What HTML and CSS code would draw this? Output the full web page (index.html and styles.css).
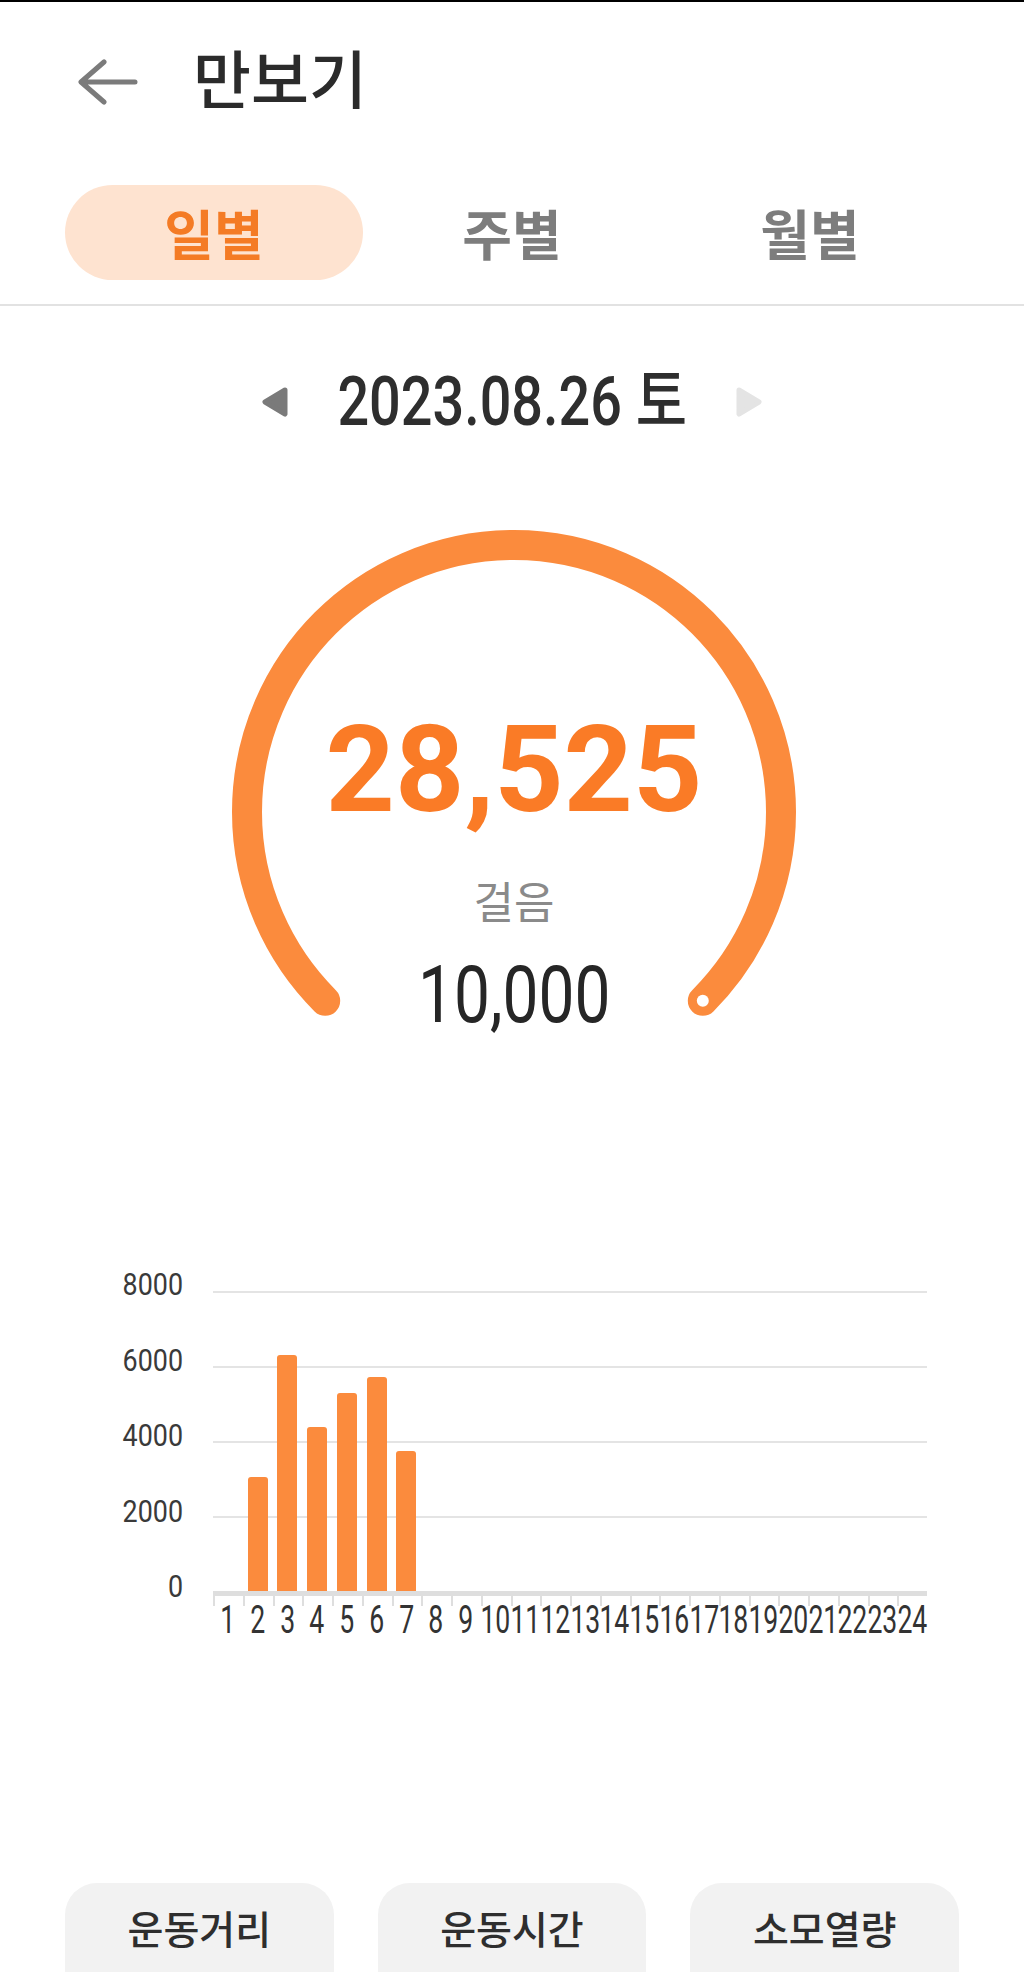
FILE: index.html
```html
<!DOCTYPE html>
<html lang="ko">
<head>
    <meta charset="UTF-8">
    <meta name="viewport" content="width=device-width, initial-scale=1.0">
    <title>만보기</title>
    <link rel="stylesheet" href="styles.css">
</head>
<body>

    <header class="header">
        <svg class="back" width="60" height="48" viewBox="0 0 60 48">
            <path d="M57 24H4M26 4L3 24L26 44" fill="none" stroke="#7b7b7b" stroke-width="5" stroke-linecap="round" stroke-linejoin="round"/>
        </svg>
        <h1 class="title">만보기</h1>
    </header>

    <nav class="tabs">
        <div class="tab active">일별</div>
        <div class="tab">주별</div>
        <div class="tab">월별</div>
    </nav>

    <div class="date-row">
        <svg width="28" height="32" viewBox="0 0 28 32">
            <polygon points="24,4 4,16 24,28" fill="#7a7a7a" stroke="#7a7a7a" stroke-width="5" stroke-linejoin="round"/>
        </svg>
        <span class="date">2023.08.26 토</span>
        <svg width="28" height="32" viewBox="0 0 28 32">
            <polygon points="4,4 24,16 4,28" fill="#e4e4e4" stroke="#e4e4e4" stroke-width="5" stroke-linejoin="round"/>
        </svg>
    </div>

    <div class="gauge">
        <svg width="600" height="600" viewBox="0 0 600 600">
            <path d="M111.2 488.8A267 267 0 1 1 488.8 488.8" fill="none" stroke="#fb8b3d" stroke-width="30" stroke-linecap="round"/>
            <circle cx="488.8" cy="488.8" r="6" fill="#fff"/>
        </svg>
        <div class="gauge-text">
            <div class="steps">28,525</div>
            <div class="unit">걸음</div>
            <div class="goal"><span>10,000</span></div>
        </div>
    </div>

    <section class="chart">
        <div class="y-labels">
            <span>8000</span>
            <span>6000</span>
            <span>4000</span>
            <span>2000</span>
            <span>0</span>
        </div>
        <div class="plot-wrap">
            <div class="plot">
                <div class="lines"><i></i><i></i><i></i><i></i><i class="base"></i></div>
                <div class="bars" id="bars"></div>
            </div>
            <div class="x-axis" id="xAxis"></div>
        </div>
    </section>

    <div class="cards">
        <div class="card">운동거리</div>
        <div class="card">운동시간</div>
        <div class="card">소모열량</div>
    </div>

    <script>
        const hourlySteps = [0, 3050, 6310, 4400, 5300, 5725, 3740, 0, 0, 0, 0, 0,
                             0, 0, 0, 0, 0, 0, 0, 0, 0, 0, 0, 0];
        const maxSteps = 8000;
        const plotHeight = 299;

        const barsEl = document.getElementById('bars');
        const xAxisEl = document.getElementById('xAxis');

        hourlySteps.forEach(function(steps, i) {
            const col = document.createElement('div');
            col.className = 'bar-col';
            if (steps > 0) {
                const bar = document.createElement('div');
                bar.className = 'bar';
                bar.style.height = Math.round(steps / maxSteps * plotHeight) + 'px';
                col.appendChild(bar);
            }
            barsEl.appendChild(col);

            const cell = document.createElement('div');
            cell.innerHTML = '<div class="tick"></div><div class="x-label"><span>' + (i + 1) + '</span></div>';
            xAxisEl.appendChild(cell);
        });
    </script>
</body>
</html>
```

FILE: styles.css
```css
* {
    box-sizing: border-box;
}
body {
    margin: 0;
    height: 1972px;
    overflow: hidden;
    font-family: Roboto, "Noto Sans CJK KR", sans-serif;
    background-color: #fff;
    color: #333;
    border-top: 2px solid #000;
}
.header {
    display: flex;
    align-items: center;
    height: 159px;
    padding-left: 78px;
}
.back {
    display: block;
}
.title {
    margin: 0 0 0 55px;
    font-size: 63px;
    font-weight: 500;
    line-height: 1;
    color: #2b2b2b;
}
.tabs {
    display: grid;
    grid-template-columns: repeat(3, 1fr);
    padding: 24px 65px;
    border-bottom: 2px solid #e2e2e2;
}
.tab {
    display: flex;
    align-items: center;
    justify-content: center;
    height: 95px;
    border-radius: 48px;
    font-size: 54px;
    font-weight: 700;
    color: #7d7d7d;
}
.tab.active {
    background-color: #fee3d0;
    color: #f47b25;
}
.date-row {
    display: flex;
    align-items: center;
    justify-content: center;
    gap: 10px;
    height: 84px;
    margin-top: 54px;
}
.date-row svg {
    display: block;
}
.date {
    display: inline-block;
    font-size: 68px;
    font-weight: 500;
    line-height: 1;
    white-space: nowrap;
    color: #2e2e2e;
    transform: scaleX(.82);
}
.gauge {
    display: grid;
    width: 600px;
    height: 600px;
    margin: 68px 0 0 214px;
}
.gauge > * {
    grid-area: 1 / 1;
}
.gauge-text {
    padding-top: 198px;
    text-align: center;
}
.steps {
    font-size: 121px;
    font-weight: 700;
    line-height: 1;
    color: #fa7b26;
}
.unit {
    margin-top: 51px;
    font-size: 44px;
    line-height: 1;
    color: #8a8a8a;
}
.goal {
    margin-top: 29px;
    font-size: 80px;
    line-height: 1;
    color: #262626;
}
.goal span {
    display: inline-block;
    transform: scaleX(.8);
}
.chart {
    display: flex;
    margin-top: 157px;
}
.y-labels {
    display: flex;
    flex-direction: column;
    justify-content: space-between;
    width: 183px;
    height: 332px;
}
.y-labels span {
    display: block;
    font-size: 32px;
    line-height: 30px;
    text-align: right;
    color: #3a3a3a;
    transform: scaleX(.84);
    transform-origin: right center;
}
.plot-wrap {
    width: 714px;
    margin-left: 30px;
    padding-top: 22px;
}
.plot {
    display: grid;
    height: 305px;
}
.plot > * {
    grid-area: 1 / 1;
}
.lines {
    display: flex;
    flex-direction: column;
    justify-content: space-between;
}
.lines i {
    display: block;
    height: 2px;
    background-color: #e4e4e4;
}
.lines i.base {
    height: 5px;
    background-color: #dedede;
}
.bars {
    display: grid;
    grid-template-columns: repeat(24, minmax(0, 1fr));
    padding-bottom: 5px;
}
.bar-col {
    display: flex;
    align-items: flex-end;
    justify-content: center;
}
.bar {
    width: 20px;
    background-color: #fb8b3d;
    border-radius: 3px 3px 0 0;
}
.x-axis {
    display: grid;
    grid-template-columns: repeat(24, minmax(0, 1fr));
}
.tick {
    height: 10px;
    border-left: 2px solid #dedede;
}
.x-label {
    display: flex;
    justify-content: center;
    font-size: 38px;
    line-height: 28px;
    white-space: nowrap;
    color: #333;
}
.x-label span {
    display: inline-block;
    transform: scaleX(.7);
}
.cards {
    display: grid;
    grid-template-columns: repeat(3, 1fr);
    gap: 44px;
    padding: 0 65px;
    margin-top: 249px;
}
.card {
    height: 89px;
    padding-top: 29px;
    background-color: #f2f2f2;
    border-radius: 32px 32px 0 0;
    text-align: center;
    font-size: 39px;
    font-weight: 500;
    line-height: 1;
    color: #2e2e2e;
}
```
